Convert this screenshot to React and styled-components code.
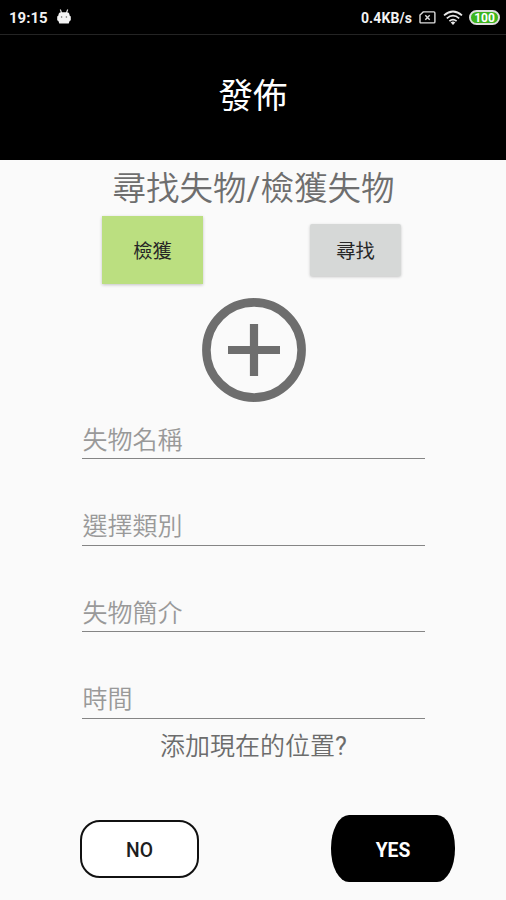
import { useState } from "react"
import styled, { createGlobalStyle } from "styled-components"

const fields = ["失物名稱", "選擇類別", "失物簡介", "時間"];

function StatusBar(){
    return <StatusWrapper>
        <StatusGroup>
            <Clock>19:15</Clock>
            <svg width="14" height="17" viewBox="0 0 14 17">
                <path d="M3.3 0.5 L4.6 4 M10.7 0.5 L9.4 4" stroke="#ddd" strokeWidth="1.2" />
                <path d="M1.6 5 Q2 3.2 4 3.2 H10 Q12 3.2 12.4 5 L12.6 6.6 L13.8 7.5 V11.2 L12.6 12 L11.7 14.6 H2.3 L1.4 12 L0.2 11.2 V7.5 L1.4 6.6 Z" fill="#f4f4f4" />
                <circle cx="4.6" cy="8" r="0.8" fill="#666" />
                <circle cx="9.4" cy="8" r="0.8" fill="#666" />
            </svg>
        </StatusGroup>
        <StatusGroup>
            <Speed>0.4KB/s</Speed>
            <svg width="17" height="13" viewBox="0 0 17 13" fill="none" stroke="#ddd" strokeWidth="1.4">
                <path d="M4.2 0.9 H14.9 Q15.9 0.9 15.9 1.9 V10.9 Q15.9 11.9 14.9 11.9 H2 Q1 11.9 1 10.9 V4 Z" />
                <path d="M6.3 4.3 L10.7 8.7 M10.7 4.3 L6.3 8.7" />
            </svg>
            <svg width="20" height="16" viewBox="0 0 20 16" fill="none" stroke="#e8e8e8" strokeWidth="1.7">
                <path d="M1 5.4 Q10 -2.4 19 5.4" />
                <path d="M3.8 8.4 Q10 3 16.2 8.4" />
                <path d="M6.4 11.2 Q10 8 13.6 11.2" />
                <path d="M7.7 12.4 Q10 10.6 12.3 12.4 L10 15 Z" fill="#e8e8e8" stroke="none" />
            </svg>
            <Battery>100</Battery>
        </StatusGroup>
    </StatusWrapper>
}

export default function App(){
    const [values, setValues] = useState({});

    function updateField(event){
        setValues({...values, [event.target.name]: event.target.value});
    }

    return <PageWrapper>
        <GlobalStyle />
        <StatusBar />
        <Header>發佈</Header>
        <PageTitle>尋找失物<Mark>/</Mark>檢獲失物</PageTitle>
        <TypeRow>
            <FoundButton>檢獲</FoundButton>
            <SearchButton>尋找</SearchButton>
        </TypeRow>
        <AddPhotoButton aria-label="+">
            <svg width="104" height="104" viewBox="0 0 104 104" fill="none" stroke="#6e6e6e">
                <circle cx="52" cy="52" r="47.6" strokeWidth="8.6" />
                <path d="M26 52 H78 M52 26 V78" strokeWidth="8.2" />
            </svg>
        </AddPhotoButton>
        <Form>
            {fields.map((name) => (
                <Field key={name} name={name} placeholder={name} value={values[name] || ""} onChange={updateField} />
            ))}
        </Form>
        <LocationText>添加現在的位置<Mark>?</Mark></LocationText>
        <ActionRow>
            <NoButton>NO</NoButton>
            <YesButton>YES</YesButton>
        </ActionRow>
    </PageWrapper>
}

const GlobalStyle = createGlobalStyle`
* { box-sizing: border-box; }
body {
    margin: 0;
    background-color: #fafafa;
    font-family: Roboto, "Noto Sans CJK TC", sans-serif;
}
button, input { font-family: inherit; }`

const PageWrapper = styled.div`
display: flex;
flex-direction: column;
height: 900px;
overflow: hidden;`

const StatusWrapper = styled.div`
display: flex;
justify-content: space-between;
align-items: center;
flex: none;
height: 35px;
padding: 1px 6px 0 9px;
color: #f2f2f2;
background-color: #000;
border-bottom: 1px solid #242424;`

const StatusGroup = styled.div`
display: flex;
align-items: center;
gap: 7px;`

const Clock = styled.span`
font-size: 15px;
font-weight: 700;
margin-right: 2px;`

const Speed = styled.span`
font-size: 14px;
font-weight: 700;
letter-spacing: 0.1px;`

const Battery = styled.span`
width: 31px;
height: 15px;
margin-left: -1px;
border: 2px solid #ddd;
border-radius: 8px;
background-color: #3cb51c;
color: #fff;
font-size: 12px;
font-weight: 700;
line-height: 12px;
text-align: center;`

const Header = styled.header`
flex: none;
height: 125px;
padding-bottom: 10px;
display: flex;
align-items: center;
justify-content: center;
background-color: #000;
color: #fff;
font-size: 34.5px;`

// latin marks sit in the regular weight beside the thinner characters
const Mark = styled.span`
font-weight: 400;`

const PageTitle = styled.h1`
flex: none;
height: 56px;
margin: 0;
padding: 1px 0 0 1px;
text-align: center;
font-size: 33.5px;
font-weight: 350;
line-height: 56px;
color: #6e6e6e;`

const TypeRow = styled.div`
flex: none;
height: 68px;
padding: 0 105px 0 102px;
display: flex;
align-items: center;
justify-content: space-between;`

const TypeButton = styled.button`
border: none;
padding: 0;
font-size: 19.3px;
font-weight: 400;
color: #262626;
box-shadow: 0 1px 3px rgba(0, 0, 0, 0.22);`

const FoundButton = styled(TypeButton)`
width: 101px;
height: 68px;
background-color: #bbdf80;`

const SearchButton = styled(TypeButton)`
width: 91px;
height: 52px;
border-radius: 2px;
background-color: #d6d8d7;`

const AddPhotoButton = styled.button`
flex: none;
align-self: center;
display: flex;
margin: 14px 0 0 1px;
padding: 0;
border: none;
background: none;`

const Form = styled.form`
flex: none;
display: flex;
flex-direction: column;
gap: 43.6px;
padding: 14px 81px 0 82px;`

const Field = styled.input`
height: 43px;
padding: 6px 0 0 0.5px;
border: none;
border-bottom: 1.5px solid #858585;
outline: none;
background: none;
font-size: 25px;
font-weight: 350;
&::placeholder {
    color: #999;
    opacity: 1;
}`

const LocationText = styled.p`
flex: none;
height: 52px;
margin: 0;
padding: 2px 0 0 1px;
text-align: center;
font-size: 25px;
font-weight: 350;
line-height: 52px;
color: #6c6c6c;`

const ActionRow = styled.div`
flex: none;
margin-top: 44px;
padding: 0 51px 0 80px;
display: flex;
align-items: center;
justify-content: space-between;`

const ActionButton = styled.button`
padding: 4px 0 0;
font-size: 19.3px;
font-weight: 500;`

const NoButton = styled(ActionButton)`
width: 119px;
height: 58px;
margin-top: 1px;
border: 2px solid #111;
border-radius: 20px;
background-color: #fff;
color: #1d1d1d;`

const YesButton = styled(ActionButton)`
width: 124px;
height: 67px;
border: none;
border-radius: 18px / 33px;
background-color: #000;
color: #fff;
font-weight: 700;`
